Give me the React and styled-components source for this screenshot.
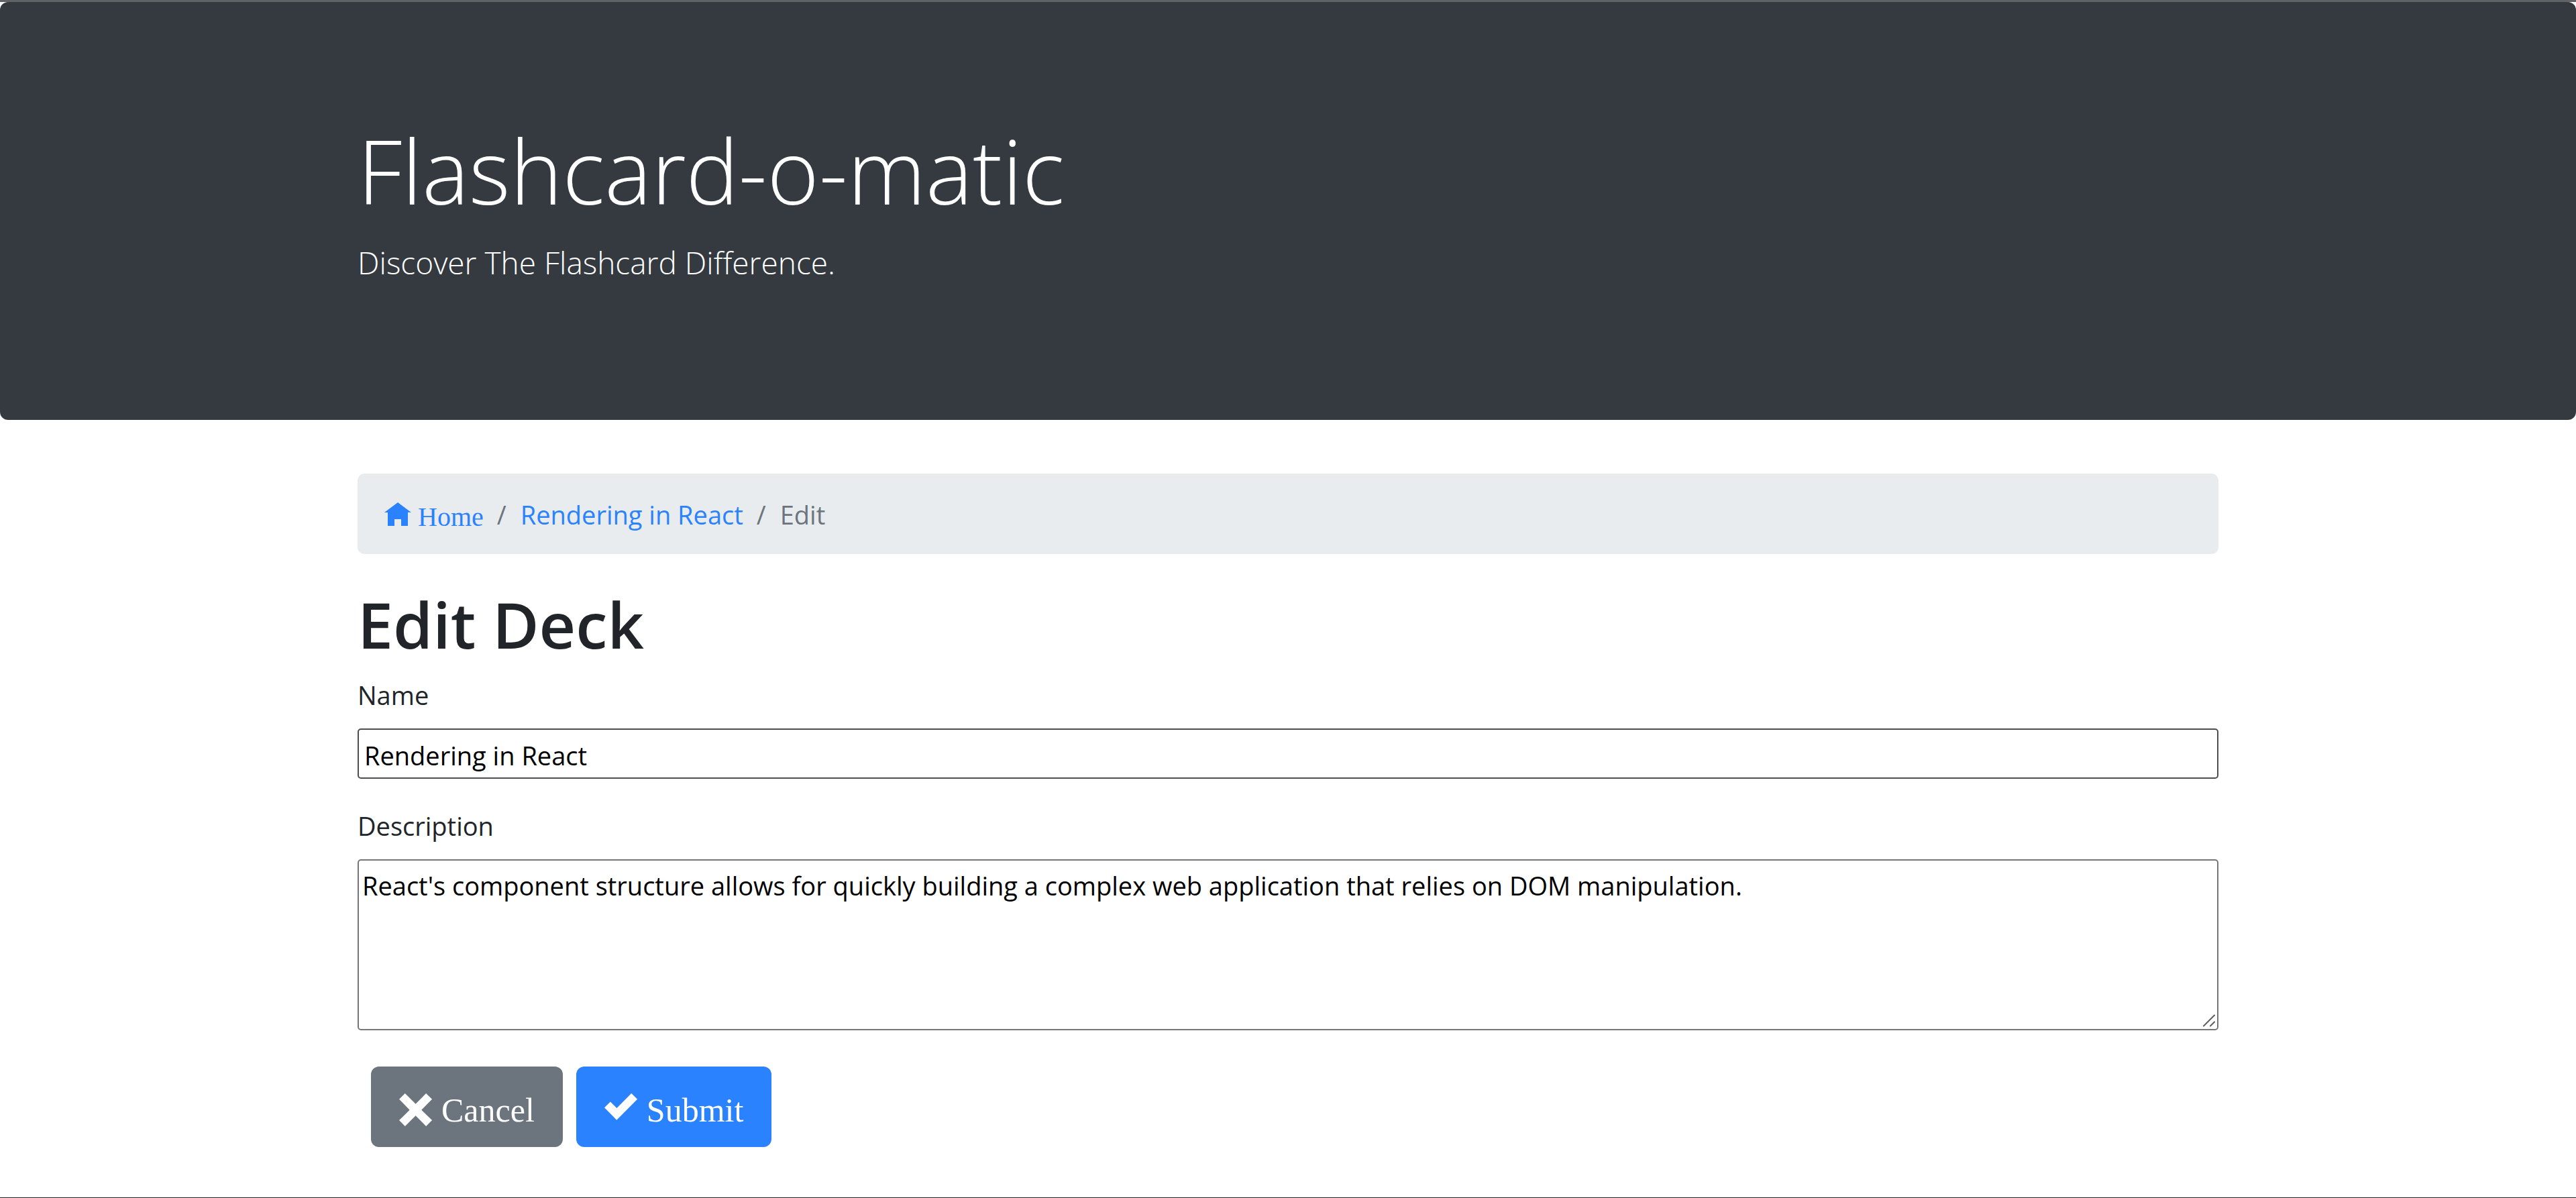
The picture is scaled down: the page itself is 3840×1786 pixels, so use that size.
import React, { useState } from "react";
import styled, { createGlobalStyle } from "styled-components";

const sans = '"Open Sans", "Noto Sans", sans-serif';
const serif = '"Liberation Serif", "Times New Roman", serif';

const GlobalStyle = createGlobalStyle`
  *, *::before, *::after { box-sizing: border-box; }
  body {
    margin: 0;
    background: #fff;
    color: #212529;
    font-family: ${sans};
    font-size: 38px;
    line-height: 60px;
  }
`;

const Page = styled.div`
  border-top: 3px solid #616366;
  border-bottom: 1px solid #222;
  padding-bottom: 75px;
`;

const Container = styled.div`
  max-width: 2774px;
  margin: 0 auto;
`;

const Jumbotron = styled.header`
  padding: 167px 80px 157px;
  margin-bottom: 80px;
  border-radius: 12px;
  background: #343a40;
  color: #fff;
`;

const Title = styled.h1`
  margin: 0 0 16px;
  font-size: 132px;
  font-weight: 300;
  line-height: 168px;
`;

const Lead = styled.p`
  margin: 0 0 40px;
  font-size: 46px;
  font-weight: 300;
  line-height: 75px;
`;

const Breadcrumb = styled.ol`
  display: flex;
  align-items: center;
  height: 120px;
  margin: 0 0 44px;
  padding: 2px 40px 0;
  border-radius: 10px;
  background: #e9ecef;
  list-style: none;
`;

const Crumb = styled.li`
  display: flex;
  color: #6c757d;

  & + &::before {
    content: "/";
    padding: 0 21px 0 20px;
  }
`;

const CrumbLink = styled.a`
  color: #2a82ff;
  text-decoration: none;
`;

const HomeLink = styled(CrumbLink)`
  display: flex;
  align-items: baseline;
  gap: 10px;
  padding-top: 8px;
  font-family: ${serif};
  font-size: 40px;
`;

const Glyph = styled.svg`
  flex: none;
  width: ${(p) => p.$size}px;
  height: ${(p) => p.$size}px;
  fill: currentColor;
`;

const Heading = styled.h2`
  margin: 0 0 16px;
  font-size: 95px;
  font-weight: 600;
  line-height: 120px;
`;

const Field = styled.div`
  display: flex;
  flex-direction: column;
  gap: 20px;
  margin-bottom: 40px;
`;

const TextInput = styled.input`
  height: 75px;
  padding: 8px 8px 4px;
  border: 2px solid #4d4d4f;
  border-radius: 5px;
  background: #fff;
  color: #000;
  font: inherit;
`;

const TextAreaFrame = styled.div`
  position: relative;
  display: flex;
`;

const TextArea = styled.textarea`
  flex: 1;
  height: 255px;
  padding: 7px 5px 5px;
  border: 2px solid #767676;
  border-radius: 5px;
  background: #fff;
  color: #000;
  font: inherit;
  resize: none;
`;

const Grip = styled.svg`
  position: absolute;
  right: 4px;
  bottom: 5px;
  width: 20px;
  height: 19px;
  fill: none;
  stroke: #5c5c5c;
  stroke-width: 2;
  stroke-linecap: round;
  pointer-events: none;
`;

const Actions = styled.div`
  display: flex;
  gap: 20px;
  margin-top: 54px;
  padding-left: 20px;
`;

const Button = styled.button`
  display: flex;
  align-items: center;
  gap: 13px;
  height: 120px;
  padding: 10px 42px 0;
  border: 0;
  border-radius: 12px;
  background: ${(p) => (p.$primary ? "#2a82ff" : "#6c757d")};
  color: #fff;
  font-family: ${serif};
  font-size: 50px;
  line-height: 75px;
`;

const HomeIcon = () => (
  <Glyph $size={40} viewBox="0 -1 8 8" aria-hidden="true">
    <path d="M4 0l-4 3h1v4h2v-2h2v2h2v-4.03l1 .03-4-3z" />
  </Glyph>
);

const CancelIcon = () => (
  <Glyph $size={50} viewBox="0 0 8 8" aria-hidden="true">
    <path d="M1.41 0l-1.41 1.41.72.72 1.78 1.81-1.78 1.78-.72.69 1.41 1.44.72-.72 1.81-1.81 1.78 1.81.69.72 1.44-1.44-.72-.69-1.81-1.78 1.81-1.81.72-.72-1.44-1.41-.69.72-1.78 1.78-1.81-1.78-.72-.72z" />
  </Glyph>
);

const CheckIcon = () => (
  <Glyph $size={50} viewBox="0 0 8 8" aria-hidden="true">
    <path d="M6.41 0l-.69.72-2.78 2.78-.81-.78-.72-.72-1.41 1.41.72.72 1.5 1.5.69.72.72-.72 3.5-3.5.72-.72-1.41-1.41z" />
  </Glyph>
);

export default function App() {
  const [name, setName] = useState("Rendering in React");
  const [description, setDescription] = useState(
    "React's component structure allows for quickly building a complex web application that relies on DOM manipulation."
  );

  return (
    <>
      <GlobalStyle />
      <Page>
        <Jumbotron>
          <Container>
            <Title>Flashcard-o-matic</Title>
            <Lead>Discover The Flashcard Difference.</Lead>
          </Container>
        </Jumbotron>
        <Container as="main">
          <nav aria-label="breadcrumb">
            <Breadcrumb>
              <Crumb>
                <HomeLink href="#home">
                  <HomeIcon />
                  Home
                </HomeLink>
              </Crumb>
              <Crumb>
                <CrumbLink href="#deck">Rendering in React</CrumbLink>
              </Crumb>
              <Crumb aria-current="page">Edit</Crumb>
            </Breadcrumb>
          </nav>
          <Heading>Edit Deck</Heading>
          <form onSubmit={(e) => e.preventDefault()}>
            <Field>
              <label htmlFor="name">Name</label>
              <TextInput id="name" type="text" value={name} onChange={(e) => setName(e.target.value)} />
            </Field>
            <Field>
              <label htmlFor="description">Description</label>
              <TextAreaFrame>
                <TextArea
                  id="description"
                  value={description}
                  onChange={(e) => setDescription(e.target.value)}
                />
                <Grip viewBox="0 0 20 19" aria-hidden="true">
                  <path d="M2 17.5L18 1.5M12 17.5L18 11.5" />
                </Grip>
              </TextAreaFrame>
            </Field>
            <Actions>
              <Button type="button">
                <CancelIcon />
                Cancel
              </Button>
              <Button type="submit" $primary>
                <CheckIcon />
                Submit
              </Button>
            </Actions>
          </form>
        </Container>
      </Page>
    </>
  );
}
